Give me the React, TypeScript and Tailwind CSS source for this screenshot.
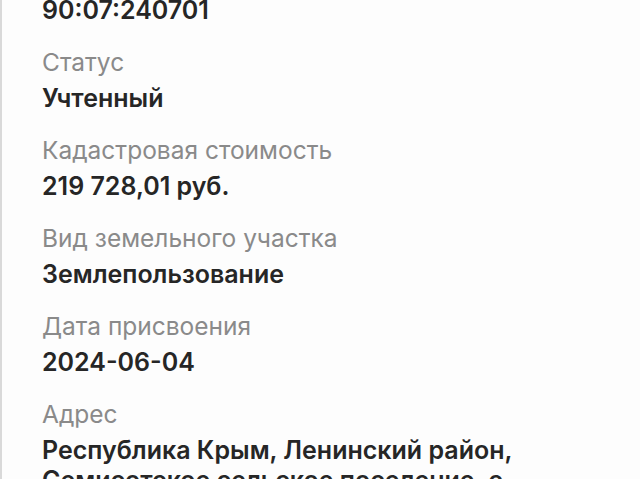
import React from 'react';

const rows: { label: string; value: string }[] = [
  { label: 'Кадастровый номер', value: '90:07:240701' },
  { label: 'Статус', value: 'Учтенный' },
  { label: 'Кадастровая стоимость', value: '219 728,01 руб.' },
  { label: 'Вид земельного участка', value: 'Землепользование' },
  { label: 'Дата присвоения', value: '2024-06-04' },
  {
    label: 'Адрес',
    value: 'Республика Крым, Ленинский район, Семисотское сельское поселение, с. Семисотка',
  },
];

export default function App() {
  return (
    <div className="h-[479px] w-[640px] overflow-hidden bg-[#fdfdfd] border-l-2 border-[#d9d9d9]">
      <div className="-mt-[41px] flex flex-col gap-[22px] pl-[40px] pr-[60px]" style={{ fontFamily: 'Inter, "Noto Sans", sans-serif' }}>
        {rows.map((r) => (
          <div key={r.label} className="flex flex-col gap-[6px]">
            <div className="text-[24.5px] leading-[30px] text-[#8a8a8a]">{r.label}</div>
            <div className="text-[25px] leading-[30px] font-semibold text-[#262626]">{r.value}</div>
          </div>
        ))}
      </div>
    </div>
  );
}
